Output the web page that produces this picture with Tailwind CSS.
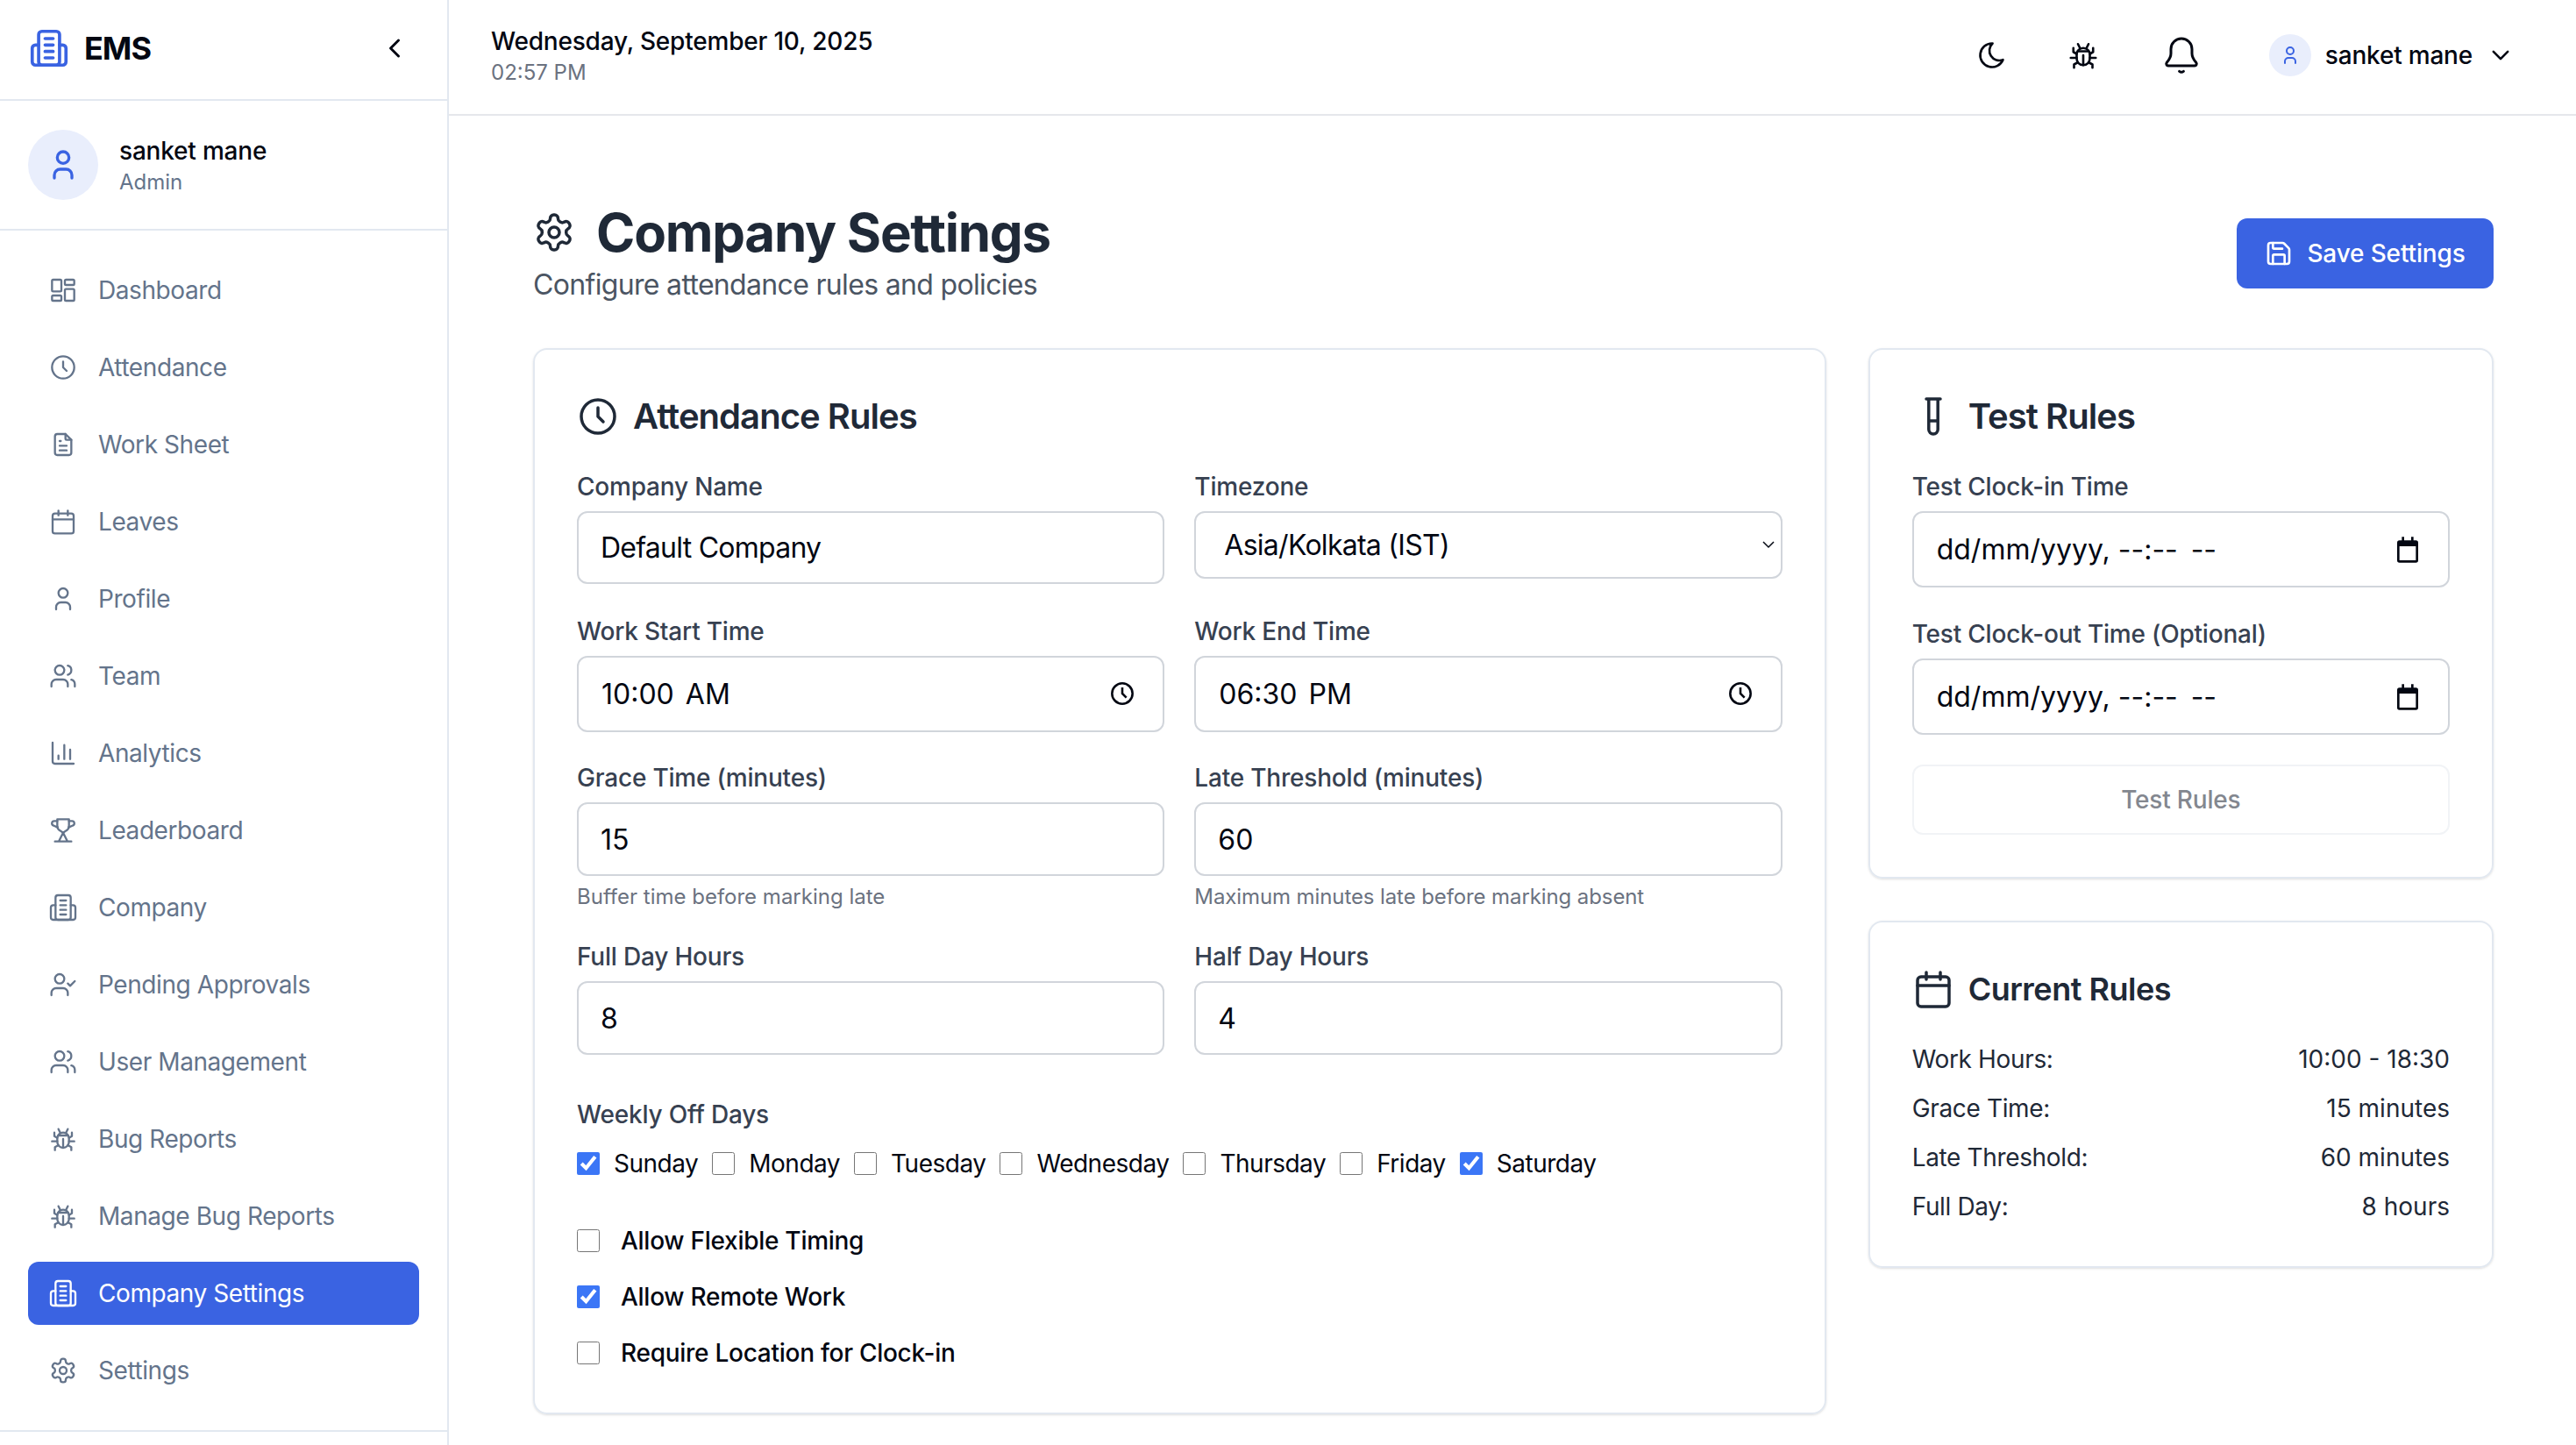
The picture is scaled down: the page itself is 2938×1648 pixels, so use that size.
<!DOCTYPE html>
<html lang="en">
<head>
  <meta charset="UTF-8" />
  <title>Company Settings</title>
  <script src="https://cdn.jsdelivr.net/npm/@tailwindcss/browser@4"></script>
</head>
<body class="h-screen overflow-hidden bg-white text-[#030712] font-['Inter',sans-serif]">

  <!-- Shared icons -->
  <svg class="hidden" xmlns="http://www.w3.org/2000/svg">
    <symbol id="i-building" viewBox="0 0 24 24"><rect x="5.5" y="1.5" width="13" height="21" rx="2"/><path d="M5.5 10H3.5a2 2 0 0 0-2 2v8.5a2 2 0 0 0 2 2h17a2 2 0 0 0 2-2V12a2 2 0 0 0-2-2h-2"/><path d="M9.5 6h5M9.5 10h5M9.5 14h5M9.5 18h5"/></symbol>
    <symbol id="i-user" viewBox="0 0 24 24"><path d="M8 7a4 4 0 1 0 8 0a4 4 0 0 0-8 0"/><path d="M6 21v-2a4 4 0 0 1 4-4h4a4 4 0 0 1 4 4v2"/></symbol>
    <symbol id="i-dashboard" viewBox="0 0 24 24"><rect x="2.5" y="3" width="8" height="10" rx="1"/><rect x="2.5" y="16.5" width="8" height="4.5" rx="1"/><rect x="13.5" y="11" width="8" height="10" rx="1"/><rect x="13.5" y="3" width="8" height="4.5" rx="1"/></symbol>
    <symbol id="i-clock" viewBox="0 0 24 24"><circle cx="12" cy="12" r="9.5"/><path d="M12 7v5l3 3"/></symbol>
    <symbol id="i-file" viewBox="0 0 24 24"><path d="M14 3v4a1 1 0 0 0 1 1h4"/><path d="M17 21H7a2 2 0 0 1-2-2V5a2 2 0 0 1 2-2h7l5 5v11a2 2 0 0 1-2 2z"/><path d="M9 9h1M9 13h6M9 17h6"/></symbol>
    <symbol id="i-calendar" viewBox="0 0 24 24"><path d="M3 7a2 2 0 0 1 2-2h14a2 2 0 0 1 2 2v13a2 2 0 0 1-2 2H5a2 2 0 0 1-2-2z"/><path d="M16 2.5v4M8 2.5v4M3 10h18"/></symbol>
    <symbol id="i-users" viewBox="0 0 24 24"><path d="M5 7a4 4 0 1 0 8 0a4 4 0 1 0-8 0"/><path d="M2 21v-2a4 4 0 0 1 4-4h6a4 4 0 0 1 4 4v2"/><path d="M16 3.13a4 4 0 0 1 0 7.75"/><path d="M22 21v-2a4 4 0 0 0-3-3.85"/></symbol>
    <symbol id="i-chart" viewBox="0 0 24 24"><path d="M3 3v16a2 2 0 0 0 2 2h16"/><path d="M18 17V9M13 17V5M8 17v-3"/></symbol>
    <symbol id="i-trophy" viewBox="0 0 24 24"><path d="M7 2.5h10V8a5 5 0 0 1-2.5 4.3L12 14l-2.5-1.7A5 5 0 0 1 7 8z"/><path d="M7 4H4.5a2 2 0 0 0-.7 3.9L7.3 9.5M17 4h2.5a2 2 0 0 1 .7 3.9l-3.5 1.6"/><path d="M12 14l-3.5 7M12 14l3.5 7M5 21.5h14"/></symbol>
    <symbol id="i-user-check" viewBox="0 0 24 24"><circle cx="9" cy="7" r="4"/><path d="M2 21v-2a4 4 0 0 1 4-4h6a4 4 0 0 1 4 4v2"/><path d="M16 11l2 2 4-4"/></symbol>
    <symbol id="i-bug" viewBox="0 0 24 24"><path d="M7 11.5a5 5 0 0 1 10 0v3a5 5 0 0 1-10 0z"/><path d="M7.8 9h8.4M12 12v7.5M9.5 6.5 8 3.5M14.5 6.5 16 3.5"/><path d="M7 11 4.5 9.5V6.5M17 11l2.5-1.5V6.5M7 14H2.5M17 14h4.5M7.8 17.5 5 19v2.5M16.2 17.5 19 19v2.5"/></symbol>
    <symbol id="i-gear" viewBox="0 0 24 24"><path d="M12.22 2h-.44a2 2 0 0 0-2 2v.18a2 2 0 0 1-1 1.73l-.43.25a2 2 0 0 1-2 0l-.15-.08a2 2 0 0 0-2.73.73l-.22.38a2 2 0 0 0 .73 2.73l.15.1a2 2 0 0 1 1 1.72v.51a2 2 0 0 1-1 1.74l-.15.09a2 2 0 0 0-.73 2.73l.22.38a2 2 0 0 0 2.73.73l.15-.08a2 2 0 0 1 2 0l.43.25a2 2 0 0 1 1 1.73V20a2 2 0 0 0 2 2h.44a2 2 0 0 0 2-2v-.18a2 2 0 0 1 1-1.73l.43-.25a2 2 0 0 1 2 0l.15.08a2 2 0 0 0 2.73-.73l.22-.39a2 2 0 0 0-.73-2.73l-.15-.08a2 2 0 0 1-1-1.74v-.5a2 2 0 0 1 1-1.74l.15-.09a2 2 0 0 0 .73-2.73l-.22-.38a2 2 0 0 0-2.73-.73l-.15.08a2 2 0 0 1-2 0l-.43-.25a2 2 0 0 1-1-1.73V4a2 2 0 0 0-2-2z"/><circle cx="12" cy="12" r="3"/></symbol>
    <symbol id="i-native-cal" viewBox="0 0 24 24"><path fill="currentColor" stroke="none" d="M7 1h2v3h6V1h2v3h2a2 2 0 0 1 2 2v15a2 2 0 0 1-2 2H5a2 2 0 0 1-2-2V6a2 2 0 0 1 2-2h2zM5 9v12h14V9z"/></symbol>
  </svg>

  <div class="flex h-full">

    <!-- Sidebar -->
    <aside class="w-[512px] shrink-0 h-full border-r-2 border-[#e2e8f0] flex flex-col">
      <div class="h-[115px] shrink-0 border-b-2 border-[#e2e8f0] flex items-center justify-between pl-[34px] pr-[42px] pb-[4px]">
        <div class="flex items-center gap-[18px]">
          <svg class="w-[44px] h-[44px] text-[#3a63e2]" fill="none" stroke="currentColor" stroke-width="2" stroke-linecap="round" stroke-linejoin="round"><use href="#i-building"/></svg>
          <span class="text-[36px] leading-[44px] font-bold tracking-[-1px]">EMS</span>
        </div>
        <svg class="w-[36px] h-[36px]" viewBox="0 0 24 24" fill="none" stroke="currentColor" stroke-width="2" stroke-linecap="round" stroke-linejoin="round"><path d="M15 6l-6 6 6 6"/></svg>
      </div>

      <div class="h-[148px] shrink-0 border-b-2 border-[#e2e8f0] flex items-center gap-[24px] px-[32px]">
        <div class="w-[80px] h-[80px] rounded-full bg-[#e9eefc] flex items-center justify-center text-[#3a63e2]">
          <svg class="w-[40px] h-[40px]" fill="none" stroke="currentColor" stroke-width="2" stroke-linecap="round" stroke-linejoin="round"><use href="#i-user"/></svg>
        </div>
        <div>
          <p class="text-[28px] leading-[40px] font-medium tracking-[-0.2px]">sanket mane</p>
          <p class="text-[24px] leading-[32px] text-[#64748b]">Admin</p>
        </div>
      </div>

      <nav class="flex-1 pt-[32px] px-[32px] flex flex-col gap-[16px] text-[28px] leading-[40px] tracking-[-0.42px] text-[#64748b]">
        <a class="h-[72px] shrink-0 flex items-center gap-[24px] pl-[24px]"><svg class="w-[32px] h-[32px]" fill="none" stroke="currentColor" stroke-width="1.75" stroke-linecap="round" stroke-linejoin="round"><use href="#i-dashboard"/></svg>Dashboard</a>
        <a class="h-[72px] shrink-0 flex items-center gap-[24px] pl-[24px]"><svg class="w-[32px] h-[32px]" fill="none" stroke="currentColor" stroke-width="1.75" stroke-linecap="round" stroke-linejoin="round"><use href="#i-clock"/></svg>Attendance</a>
        <a class="h-[72px] shrink-0 flex items-center gap-[24px] pl-[24px]"><svg class="w-[32px] h-[32px]" fill="none" stroke="currentColor" stroke-width="1.75" stroke-linecap="round" stroke-linejoin="round"><use href="#i-file"/></svg>Work Sheet</a>
        <a class="h-[72px] shrink-0 flex items-center gap-[24px] pl-[24px]"><svg class="w-[32px] h-[32px]" fill="none" stroke="currentColor" stroke-width="1.75" stroke-linecap="round" stroke-linejoin="round"><use href="#i-calendar"/></svg>Leaves</a>
        <a class="h-[72px] shrink-0 flex items-center gap-[24px] pl-[24px]"><svg class="w-[32px] h-[32px]" fill="none" stroke="currentColor" stroke-width="1.75" stroke-linecap="round" stroke-linejoin="round"><use href="#i-user"/></svg>Profile</a>
        <a class="h-[72px] shrink-0 flex items-center gap-[24px] pl-[24px]"><svg class="w-[32px] h-[32px]" fill="none" stroke="currentColor" stroke-width="1.75" stroke-linecap="round" stroke-linejoin="round"><use href="#i-users"/></svg>Team</a>
        <a class="h-[72px] shrink-0 flex items-center gap-[24px] pl-[24px]"><svg class="w-[32px] h-[32px]" fill="none" stroke="currentColor" stroke-width="1.75" stroke-linecap="round" stroke-linejoin="round"><use href="#i-chart"/></svg>Analytics</a>
        <a class="h-[72px] shrink-0 flex items-center gap-[24px] pl-[24px]"><svg class="w-[32px] h-[32px]" fill="none" stroke="currentColor" stroke-width="1.75" stroke-linecap="round" stroke-linejoin="round"><use href="#i-trophy"/></svg>Leaderboard</a>
        <a class="h-[72px] shrink-0 flex items-center gap-[24px] pl-[24px]"><svg class="w-[32px] h-[32px]" fill="none" stroke="currentColor" stroke-width="1.75" stroke-linecap="round" stroke-linejoin="round"><use href="#i-building"/></svg>Company</a>
        <a class="h-[72px] shrink-0 flex items-center gap-[24px] pl-[24px]"><svg class="w-[32px] h-[32px]" fill="none" stroke="currentColor" stroke-width="1.75" stroke-linecap="round" stroke-linejoin="round"><use href="#i-user-check"/></svg>Pending Approvals</a>
        <a class="h-[72px] shrink-0 flex items-center gap-[24px] pl-[24px]"><svg class="w-[32px] h-[32px]" fill="none" stroke="currentColor" stroke-width="1.75" stroke-linecap="round" stroke-linejoin="round"><use href="#i-users"/></svg>User Management</a>
        <a class="h-[72px] shrink-0 flex items-center gap-[24px] pl-[24px]"><svg class="w-[32px] h-[32px]" fill="none" stroke="currentColor" stroke-width="1.75" stroke-linecap="round" stroke-linejoin="round"><use href="#i-bug"/></svg>Bug Reports</a>
        <a class="h-[72px] shrink-0 flex items-center gap-[24px] pl-[24px]"><svg class="w-[32px] h-[32px]" fill="none" stroke="currentColor" stroke-width="1.75" stroke-linecap="round" stroke-linejoin="round"><use href="#i-bug"/></svg>Manage Bug Reports</a>
        <a class="h-[72px] shrink-0 flex items-center gap-[24px] pl-[24px] rounded-[12px] bg-[#3a63e2] text-white"><svg class="w-[32px] h-[32px]" fill="none" stroke="currentColor" stroke-width="1.75" stroke-linecap="round" stroke-linejoin="round"><use href="#i-building"/></svg>Company Settings</a>
        <a class="h-[72px] shrink-0 flex items-center gap-[24px] pl-[24px]"><svg class="w-[32px] h-[32px]" fill="none" stroke="currentColor" stroke-width="1.75" stroke-linecap="round" stroke-linejoin="round"><use href="#i-gear"/></svg>Settings</a>
      </nav>
      <div class="h-[17px] shrink-0 border-t-2 border-[#e2e8f0]"></div>
    </aside>

    <div class="flex-1 min-w-0 flex flex-col">

      <!-- Top bar -->
      <header class="h-[132px] shrink-0 border-b-2 border-[#e5e7eb] flex items-center justify-between pl-[48px] pr-[72px] pb-[4px]">
        <div>
          <p class="text-[28px] leading-[40px] font-medium tracking-[-0.2px]">Wednesday, September 10, 2025</p>
          <p class="text-[24px] leading-[32px] text-[#6b7280]">02:57 PM</p>
        </div>
        <div class="flex items-center">
          <svg class="w-[36px] h-[36px] mr-[68px]" viewBox="0 0 24 24" fill="none" stroke="currentColor" stroke-width="1.75" stroke-linecap="round" stroke-linejoin="round"><path d="M12 3c.132 0 .263 0 .393 0a7.5 7.5 0 0 0 7.92 12.446a9 9 0 1 1-8.313-12.454z"/></svg>
          <svg class="w-[36px] h-[36px] mr-[70px]" fill="none" stroke="currentColor" stroke-width="1.75" stroke-linecap="round" stroke-linejoin="round"><use href="#i-bug"/></svg>
          <svg class="w-[48px] h-[48px] mr-[76px]" viewBox="0 0 24 24" fill="none" stroke="currentColor" stroke-width="1.5" stroke-linecap="round" stroke-linejoin="round"><path d="M12 2.5a6 6 0 0 0-6 6V11c0 2.5-1.2 3.8-2.4 5.2-.5.6-.1 1.8.8 1.8h15.2c.9 0 1.3-1.2.8-1.8C19.2 14.8 18 13.5 18 11V8.5a6 6 0 0 0-6-6z"/><path d="M10.8 21.2c.7.5 1.7.5 2.4 0"/></svg>
          <div class="w-[48px] h-[48px] rounded-full bg-[#e9eefc] flex items-center justify-center text-[#3a63e2]">
            <svg class="w-[24px] h-[24px]" fill="none" stroke="currentColor" stroke-width="2" stroke-linecap="round" stroke-linejoin="round"><use href="#i-user"/></svg>
          </div>
          <span class="ml-[16px] text-[28px] leading-[40px] font-medium tracking-[-0.2px]">sanket mane</span>
          <svg class="w-[28px] h-[28px] ml-[18px]" viewBox="0 0 24 24" fill="none" stroke="currentColor" stroke-width="2.25" stroke-linecap="round" stroke-linejoin="round"><path d="M5 8.5l7 7 7-7"/></svg>
        </div>
      </header>

      <main class="flex-1 min-h-0 pl-[96px] pr-[94px] pt-[97px]">
        <!-- Page heading -->
        <div class="flex items-center justify-between mb-[48px]">
          <div>
            <h1 class="flex items-center gap-[24px] text-[60px] leading-[72px] font-bold tracking-[-1.25px] text-[#1f2937]">
              <svg class="w-[48px] h-[48px] shrink-0" fill="none" stroke="currentColor" stroke-width="1.75" stroke-linecap="round" stroke-linejoin="round"><use href="#i-gear"/></svg>
              Company Settings
            </h1>
            <p class="text-[32px] leading-[48px] tracking-[-0.67px] text-[#4b5563]">Configure attendance rules and policies</p>
          </div>
          <button class="h-[80px] w-[293px] rounded-[12px] bg-[#3a63e2] text-white text-[28px] leading-[40px] font-medium tracking-[-0.15px] flex items-center justify-center gap-[16px]">
            <svg class="w-[32px] h-[32px]" viewBox="0 0 24 24" fill="none" stroke="currentColor" stroke-width="2" stroke-linecap="round" stroke-linejoin="round"><path d="M15.2 3a2 2 0 0 1 1.4.6l3.8 3.8a2 2 0 0 1 .6 1.4V19a2 2 0 0 1-2 2H5a2 2 0 0 1-2-2V5a2 2 0 0 1 2-2z"/><path d="M17 21v-7a1 1 0 0 0-1-1H8a1 1 0 0 0-1 1v7"/><path d="M7 3v4a1 1 0 0 0 1 1h7"/></svg>
            Save Settings
          </button>
        </div>

        <div class="grid grid-cols-3 gap-[48px] items-start">

          <!-- Attendance Rules -->
          <section class="col-span-2 rounded-[16px] border-2 border-[#e2e8f0] shadow-sm p-[48px]">
            <h2 class="flex items-center gap-[16px] text-[40px] leading-[56px] font-semibold tracking-[-0.95px] text-[#1f2937] mb-[32px]">
              <svg class="w-[48px] h-[48px] shrink-0" fill="none" stroke="currentColor" stroke-width="1.75" stroke-linecap="round" stroke-linejoin="round"><use href="#i-clock"/></svg>
              Attendance Rules
            </h2>

            <div class="grid grid-cols-2 gap-x-[34px] gap-y-[32px]">
              <div class="pb-[2px]">
                <label class="block text-[28px] leading-[40px] font-medium tracking-[-0.2px] text-[#374151] mb-[8px]">Company Name</label>
                <input type="text" value="Default Company" class="w-full h-[83px] rounded-[12px] border-2 border-[#d1d5db] px-[25px] text-[32px] tracking-[-0.75px]" />
              </div>
              <div>
                <label class="block text-[28px] leading-[40px] font-medium tracking-[-0.2px] text-[#374151] mb-[8px]">Timezone</label>
                <div class="relative">
                  <select class="w-full h-[77px] appearance-none rounded-[12px] border-2 border-[#d1d5db] pl-[32px] text-[32px] tracking-[-0.73px]"><option>Asia/Kolkata (IST)</option></select>
                  <svg class="absolute right-[8px] top-[30px] w-[16px] h-[16px]" viewBox="0 0 16 16" fill="none" stroke="#030712" stroke-width="1.5"><path d="M2 5l6 6 6-6"/></svg>
                </div>
              </div>
              <div>
                <label class="block text-[28px] leading-[40px] font-medium tracking-[-0.2px] text-[#374151] mb-[8px]">Work Start Time</label>
                <div class="relative">
                  <input type="text" value="10:00 AM" class="w-full h-[87px] rounded-[12px] border-2 border-[#d1d5db] px-[26px] text-[32px] [word-spacing:4px]" />
                  <svg class="absolute right-[34px] top-[29px] w-[28px] h-[28px]" viewBox="0 0 24 24" fill="none" stroke="#030712" stroke-width="2.2"><circle cx="12" cy="12" r="10"/><path d="M12 6v6l4 4"/></svg>
                </div>
              </div>
              <div>
                <label class="block text-[28px] leading-[40px] font-medium tracking-[-0.2px] text-[#374151] mb-[8px]">Work End Time</label>
                <div class="relative">
                  <input type="text" value="06:30 PM" class="w-full h-[87px] rounded-[12px] border-2 border-[#d1d5db] px-[26px] text-[32px] [word-spacing:4px]" />
                  <svg class="absolute right-[34px] top-[29px] w-[28px] h-[28px]" viewBox="0 0 24 24" fill="none" stroke="#030712" stroke-width="2.2"><circle cx="12" cy="12" r="10"/><path d="M12 6v6l4 4"/></svg>
                </div>
              </div>
              <div>
                <label class="block text-[28px] leading-[40px] font-medium tracking-[-0.2px] text-[#374151] mb-[8px]">Grace Time (minutes)</label>
                <input type="number" value="15" class="w-full h-[84px] rounded-[12px] border-2 border-[#d1d5db] px-[25px] text-[32px]" />
                <p class="mt-[8px] text-[24px] leading-[32px] text-[#6b7280]">Buffer time before marking late</p>
              </div>
              <div>
                <label class="block text-[28px] leading-[40px] font-medium tracking-[-0.2px] text-[#374151] mb-[8px]">Late Threshold (minutes)</label>
                <input type="number" value="60" class="w-full h-[84px] rounded-[12px] border-2 border-[#d1d5db] px-[25px] text-[32px]" />
                <p class="mt-[8px] text-[24px] leading-[32px] tracking-[-0.1px] text-[#6b7280]">Maximum minutes late before marking absent</p>
              </div>
              <div>
                <label class="block text-[28px] leading-[40px] font-medium tracking-[-0.2px] text-[#374151] mb-[8px]">Full Day Hours</label>
                <input type="number" value="8" class="w-full h-[84px] rounded-[12px] border-2 border-[#d1d5db] px-[25px] text-[32px]" />
              </div>
              <div>
                <label class="block text-[28px] leading-[40px] font-medium tracking-[-0.2px] text-[#374151] mb-[8px]">Half Day Hours</label>
                <input type="number" value="4" class="w-full h-[84px] rounded-[12px] border-2 border-[#d1d5db] px-[25px] text-[32px]" />
              </div>
            </div>

            <p class="mt-[48px] mb-[16px] text-[28px] leading-[40px] font-medium tracking-[-0.2px] text-[#374151]">Weekly Off Days</p>
            <div class="flex gap-[16px] text-[28px] leading-[40px] tracking-[-0.5px]">
              <label class="flex items-center gap-[16px]"><input type="checkbox" checked class="w-[26px] h-[26px] accent-[#3b76f6]" />Sunday</label>
              <label class="flex items-center gap-[16px]"><input type="checkbox" class="w-[26px] h-[26px] accent-[#3b76f6]" />Monday</label>
              <label class="flex items-center gap-[16px]"><input type="checkbox" class="w-[26px] h-[26px] accent-[#3b76f6]" />Tuesday</label>
              <label class="flex items-center gap-[16px]"><input type="checkbox" class="w-[26px] h-[26px] accent-[#3b76f6]" />Wednesday</label>
              <label class="flex items-center gap-[16px]"><input type="checkbox" class="w-[26px] h-[26px] accent-[#3b76f6]" />Thursday</label>
              <label class="flex items-center gap-[16px]"><input type="checkbox" class="w-[26px] h-[26px] accent-[#3b76f6]" />Friday</label>
              <label class="flex items-center gap-[16px]"><input type="checkbox" checked class="w-[26px] h-[26px] accent-[#3b76f6]" />Saturday</label>
            </div>

            <div class="mt-[48px] flex flex-col gap-[24px] text-[28px] leading-[40px] font-medium tracking-[-0.27px]">
              <label class="flex items-center gap-[24px]"><input type="checkbox" class="w-[26px] h-[26px] accent-[#3b76f6]" />Allow Flexible Timing</label>
              <label class="flex items-center gap-[24px]"><input type="checkbox" checked class="w-[26px] h-[26px] accent-[#3b76f6]" />Allow Remote Work</label>
              <label class="flex items-center gap-[24px]"><input type="checkbox" class="w-[26px] h-[26px] accent-[#3b76f6]" />Require Location for Clock-in</label>
            </div>
          </section>

          <div class="flex flex-col gap-[48px]">

            <!-- Test Rules -->
            <section class="rounded-[16px] border-2 border-[#e2e8f0] shadow-sm p-[48px]">
              <h2 class="flex items-center gap-[16px] text-[40px] leading-[56px] font-semibold tracking-[-0.95px] text-[#1f2937] mb-[32px]">
                <svg class="w-[48px] h-[48px] shrink-0" viewBox="0 0 24 24" fill="none" stroke="currentColor" stroke-width="1.75" stroke-linecap="round" stroke-linejoin="round"><path d="M8 2h8M9.4 2v17.4a2.6 2.6 0 0 0 5.2 0V2M9.4 14.5h5.2"/></svg>
                Test Rules
              </h2>
              <label class="block text-[28px] leading-[40px] font-medium tracking-[-0.2px] text-[#374151] mb-[8px]">Test Clock-in Time</label>
              <div class="relative mb-[33px]">
                <input type="text" value="dd/mm/yyyy, --:--&#8201; --" class="w-full h-[87px] rounded-[12px] border-2 border-[#d1d5db] px-[26px] text-[32px]" />
                <svg class="absolute right-[32px] top-[28px] w-[32px] h-[32px] text-[#030712]"><use href="#i-native-cal"/></svg>
              </div>
              <label class="block text-[28px] leading-[40px] font-medium tracking-[-0.2px] text-[#374151] mb-[8px]">Test Clock-out Time (Optional)</label>
              <div class="relative mb-[34px]">
                <input type="text" value="dd/mm/yyyy, --:--&#8201; --" class="w-full h-[87px] rounded-[12px] border-2 border-[#d1d5db] px-[26px] text-[32px]" />
                <svg class="absolute right-[32px] top-[28px] w-[32px] h-[32px] text-[#030712]"><use href="#i-native-cal"/></svg>
              </div>
              <button class="w-full h-[80px] rounded-[12px] border-2 border-[#f1f3f6] text-[28px] leading-[40px] font-medium tracking-[-0.2px] text-[#83878f]">Test Rules</button>
            </section>

            <!-- Current Rules -->
            <section class="rounded-[16px] border-2 border-[#e2e8f0] shadow-sm p-[48px]">
              <h2 class="flex items-center gap-[16px] text-[36px] leading-[56px] font-semibold tracking-[-0.5px] text-[#1f2937] mb-[32px]">
                <svg class="w-[48px] h-[48px] shrink-0" fill="none" stroke="currentColor" stroke-width="1.75" stroke-linecap="round" stroke-linejoin="round"><use href="#i-calendar"/></svg>
                Current Rules
              </h2>
              <dl class="flex flex-col gap-[16px] text-[28px] leading-[40px] text-[#1f2937]">
                <div class="flex justify-between"><dt class="tracking-[-0.35px]">Work Hours:</dt><dd>10:00 - 18:30</dd></div>
                <div class="flex justify-between"><dt class="tracking-[-0.35px]">Grace Time:</dt><dd>15 minutes</dd></div>
                <div class="flex justify-between"><dt class="tracking-[-0.35px]">Late Threshold:</dt><dd>60 minutes</dd></div>
                <div class="flex justify-between"><dt class="tracking-[-0.35px]">Full Day:</dt><dd>8 hours</dd></div>
              </dl>
            </section>
          </div>
        </div>
      </main>
    </div>
  </div>
</body>
</html>
